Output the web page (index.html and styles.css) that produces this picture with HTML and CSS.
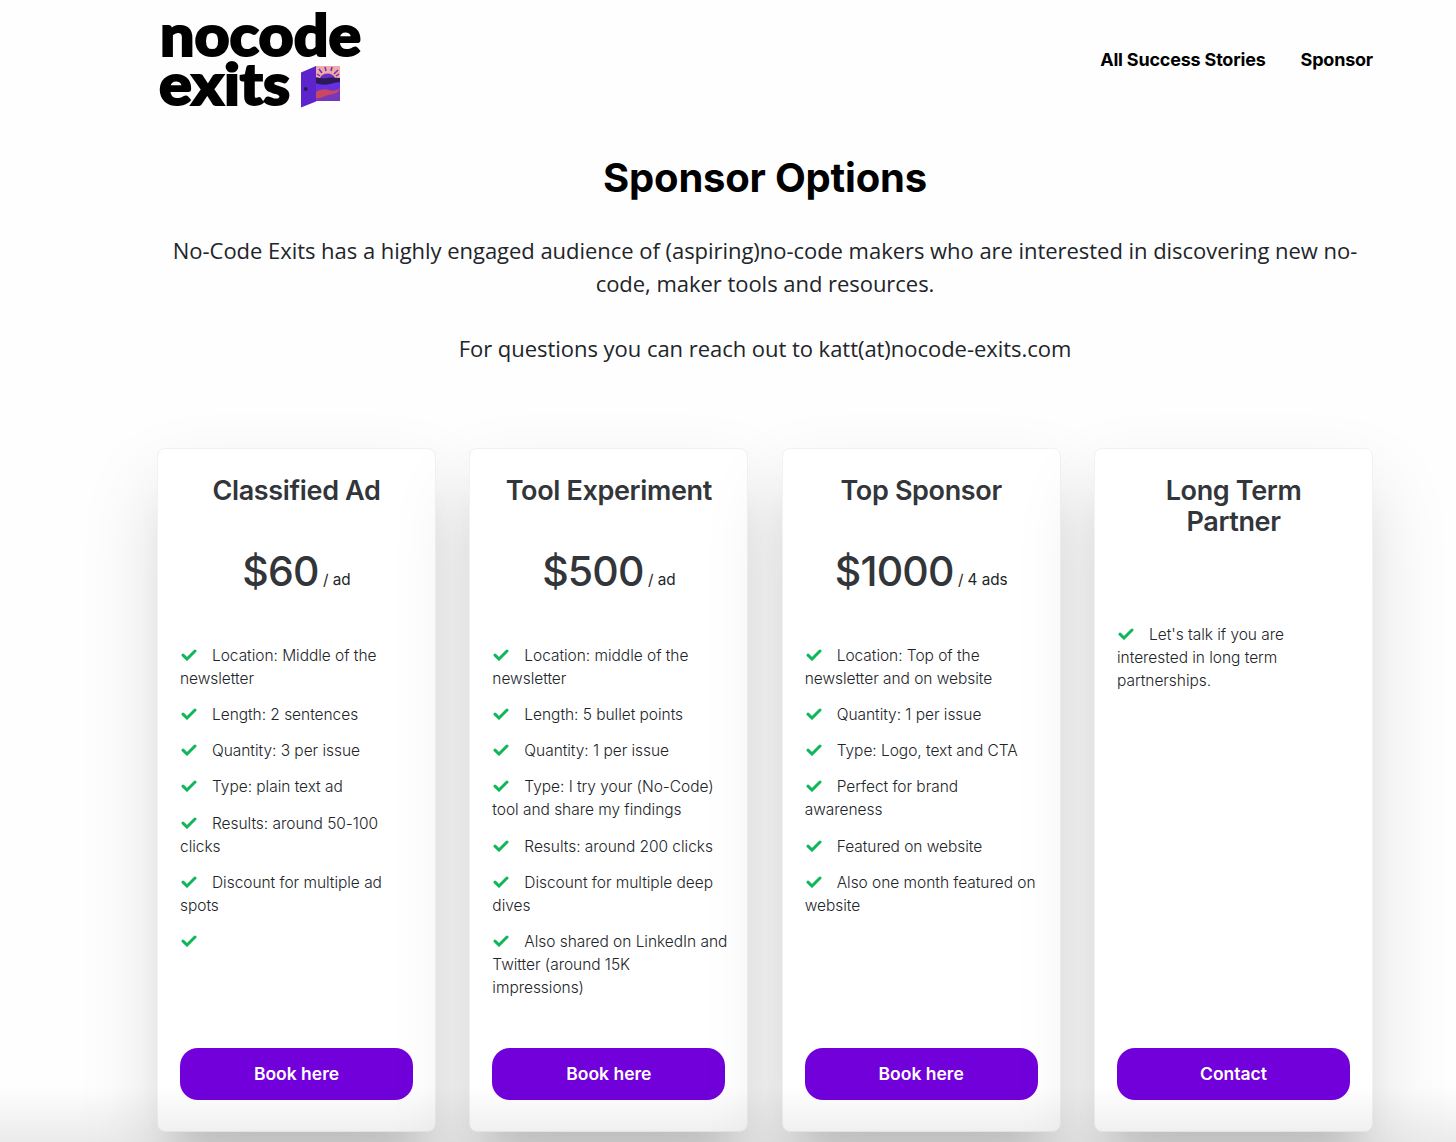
FILE: index.html
```html
<!DOCTYPE html>
<html lang="en">
<head>
<meta charset="utf-8">
<title>Sponsor Options – No-Code Exits</title>
<link rel="stylesheet" href="styles.css">
</head>
<body>
<svg class="defs" aria-hidden="true"><symbol id="check" viewBox="0 0 16 12"><path d="M2 6.2 6 10 14 2" fill="none" stroke="#10b759" stroke-width="3" stroke-linecap="round"/></symbol></svg>
<div class="page">
  <header class="header">
    <svg class="logo" viewBox="0 0 206 112" role="img" aria-label="nocode exits">
      <text x="3" y="56" textLength="201" lengthAdjust="spacingAndGlyphs">nocode</text>
      <text x="2" y="105" textLength="131" lengthAdjust="spacingAndGlyphs">exits</text>
      <g transform="translate(144 66)">
        <path d="M14 0H39V35H14Z" fill="#7738b8"/>
        <path d="M14 0H39V12H14Z" fill="#f2aaa5"/>
        <path d="M19 12a8 7 0 0 1 15 0Z" fill="#6a2fc4"/>
        <path d="M16 8 19 10M18 3l3 4M24 1l1 4M31 1l-1 4M37 4l-4 4M38 8l-3 2" stroke="#6a2fc4" stroke-width="1.5"/>
        <path d="M14 11q8 2 12 1t13 0v5q-6-1-10 2t-15-1Z" fill="#2c1a58"/>
        <path d="M14 17q8 3 15 1t10-2v7q-12 2-25 6Z" fill="#6530df"/>
        <path d="M14 26q7-4 14-2t11-2q-1 5-7 6t-10 3-8 1Z" fill="#c94761"/>
        <path d="M0 6.500 15 0V35.500L0 41.500Z" fill="#5d24cc"/>
        <circle cx="4.700" cy="23" r="2" fill="#2b1760"/>
      </g>
    </svg>
    <nav class="nav"><a>All Success Stories</a><a>Sponsor</a></nav>
  </header>
  <section class="intro">
    <h1>Sponsor Options</h1>
    <p>No-Code Exits has a highly engaged audience of (aspiring)no-code makers who are interested in discovering new no-<br>code, maker tools and resources.</p>
    <p>For questions you can reach out to katt(at)nocode-exits.com</p>
  </section>
  <main class="plans">
    <article class="card">
      <h2>Classified Ad</h2>
      <div class="price"><strong>$60</strong><span> / ad</span></div>
      <ul>
        <li><svg><use href="#check"/></svg>Location: Middle of the<br>newsletter</li>
        <li><svg><use href="#check"/></svg>Length: 2 sentences</li>
        <li><svg><use href="#check"/></svg>Quantity: 3 per issue</li>
        <li><svg><use href="#check"/></svg>Type: plain text ad</li>
        <li><svg><use href="#check"/></svg>Results: around 50-100<br>clicks</li>
        <li><svg><use href="#check"/></svg>Discount for multiple ad<br>spots</li>
        <li><svg><use href="#check"/></svg></li>
      </ul>
      <a class="button">Book here</a>
    </article>
    <article class="card">
      <h2>Tool Experiment</h2>
      <div class="price"><strong>$500</strong><span> / ad</span></div>
      <ul>
        <li><svg><use href="#check"/></svg>Location: middle of the<br>newsletter</li>
        <li><svg><use href="#check"/></svg>Length: 5 bullet points</li>
        <li><svg><use href="#check"/></svg>Quantity: 1 per issue</li>
        <li><svg><use href="#check"/></svg>Type: I try your (No-Code)<br>tool and share my findings</li>
        <li><svg><use href="#check"/></svg>Results: around 200 clicks</li>
        <li><svg><use href="#check"/></svg>Discount for multiple deep<br>dives</li>
        <li><svg><use href="#check"/></svg>Also shared on LinkedIn and<br>Twitter (around 15K<br>impressions)</li>
      </ul>
      <a class="button">Book here</a>
    </article>
    <article class="card">
      <h2>Top Sponsor</h2>
      <div class="price"><strong>$1000</strong><span> / 4 ads</span></div>
      <ul>
        <li><svg><use href="#check"/></svg>Location: Top of the<br>newsletter and on website</li>
        <li><svg><use href="#check"/></svg>Quantity: 1 per issue</li>
        <li><svg><use href="#check"/></svg>Type: Logo, text and CTA</li>
        <li><svg><use href="#check"/></svg>Perfect for brand<br>awareness</li>
        <li><svg><use href="#check"/></svg>Featured on website</li>
        <li><svg><use href="#check"/></svg>Also one month featured on<br>website</li>
      </ul>
      <a class="button">Book here</a>
    </article>
    <article class="card partner">
      <h2>Long Term<br>Partner</h2>
      <ul>
        <li><svg><use href="#check"/></svg>Let's talk if you are<br>interested in long term<br>partnerships.</li>
      </ul>
      <a class="button">Contact</a>
    </article>
  </main>
</div>
<div class="fade"></div>
</body>
</html>
```
FILE: styles.css
```css
* { box-sizing: border-box; }
body { margin: 0; height: 1142px; overflow: hidden; background: #fefefe; color: #212529; font-family: Inter, sans-serif; }
.defs { display: none; }
.page { width: 1216px; margin-left: 157px; }
.header { height: 120px; display: flex; justify-content: space-between; }
.logo { width: 206px; height: 112px; overflow: visible; }
.logo text { font: 900 57px Lato, sans-serif; fill: #000; stroke: #000; stroke-width: 2px; }
.nav { display: flex; gap: 35px; padding-top: 49px; font-size: 18px; line-height: 22px; font-weight: 700; color: #000; letter-spacing: -.2px; }
.intro { height: 328px; padding-top: 33px; text-align: center; }
h1 { margin: 0 0 31px; font-size: 40px; line-height: 50px; font-weight: 700; color: #000; letter-spacing: -.2px; }
.intro p { margin: 0 0 32.500px; font: 400 22px/33px "Open Sans", sans-serif; letter-spacing: -.038px; white-space: nowrap; }
.intro p + p { margin-top: -.5px; }
.plans { display: grid; grid-template-columns: repeat(4, minmax(0, 1fr)); gap: 33.4px; height: 684px; }
.card { display: flex; flex-direction: column; padding: 26px 22px 31px; border: 1px solid #f1f1f6; border-radius: 8px; background: #fff; box-shadow: 0 38px 80px rgba(0, 0, 0, .13), 0 36px 36px -20px rgba(0, 0, 0, .12); }
h2 { margin: 0; font-size: 27px; line-height: 31px; font-weight: 600; text-align: center; color: #323539; letter-spacing: -.35px; }
.price { margin-top: 40px; height: 50px; line-height: 50px; font-size: 15.300px; text-align: center; white-space: nowrap; }
.price strong { font-size: 41px; font-weight: 500; color: #323539; letter-spacing: -.8px; }
.price span { vertical-align: 1px; letter-spacing: -.05px; }
ul { list-style: none; margin: 48px 0 0; padding: 0; font-size: 15.500px; line-height: 23px; font-weight: 300; letter-spacing: -.04px; }
.partner ul { margin-top: 86px; }
li { min-height: 23px; margin-bottom: 13.150px; white-space: nowrap; }
li svg { width: 16px; height: 12px; margin: 0 15px 0 1px; vertical-align: 0; }
.button { display: block; margin-top: auto; height: 52px; border-radius: 18px; background: #7100db; color: #fff; font-size: 17.500px; line-height: 51px; font-weight: 600; text-align: center; }
.fade { position: absolute; left: 0; right: 0; bottom: 0; height: 56px; background: linear-gradient(rgba(0, 0, 0, 0), rgba(0, 0, 0, .075)); }
```
